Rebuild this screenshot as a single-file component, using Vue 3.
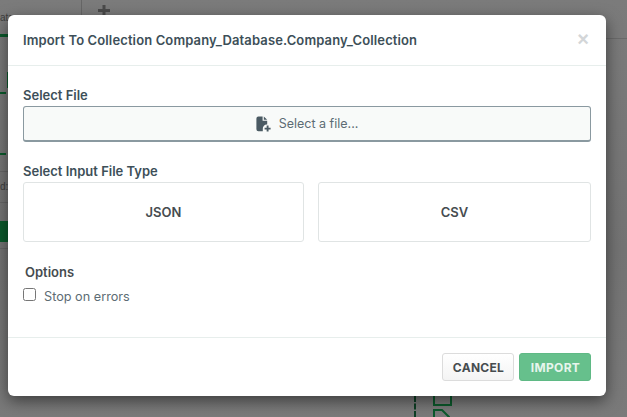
<script setup>
const fileTypes = ['JSON', 'CSV']
</script>

<template>
  <div class="page">
    <div class="backdrop" aria-hidden="true">
      <span class="bg-vline"></span>
      <span class="bg-hline"></span>
      <svg class="bg-plus" width="12" height="11" viewBox="0 0 12 11"><path d="M6 0V11M0 5.5H12" stroke="#4a4a4a" stroke-width="3"/></svg>
      <span class="bg-text t1">ata</span>
      <span class="bg-text t2">d:</span>
      <span class="bg-green g1"></span>
      <span class="bg-green g2"></span>
      <span class="bg-green g3"></span>
      <span class="bg-green g4"></span>
      <span class="bg-green g5"></span>
      <span class="bg-rule r1"></span>
      <span class="bg-rule r2"></span>
      <span class="bg-rule r3"></span>
      <span class="bg-dash"></span>
      <span class="bg-box"></span>
      <svg class="bg-doc" width="20" height="12" viewBox="0 0 20 12"><path d="M1 12V1h8l7 7v4" fill="none" stroke="#0b5a2c" stroke-width="2"/></svg>
    </div>
    <div class="overlay">
      <section class="modal">
        <header class="modal-head">
          <h1>Import To Collection Company_Database.Company_Collection</h1>
          <span class="close">×</span>
        </header>
        <div class="modal-body">
          <label class="label">Select File</label>
          <button class="file-btn">
            <svg width="16" height="16" viewBox="0 0 16 16">
              <path d="M2.4 0.6H6.6V4.8H11.2V8.6A4 4 0 0 0 6.8 13V15.2H2.4A2 2 0 0 1 0.4 13.2V2.6A2 2 0 0 1 2.4 .6Z" fill="#4a5a63"/>
              <path d="M7.8 0.6L11.2 3.8H7.8Z" fill="#4a5a63"/>
              <path d="M11.6 9.6V15.6M8.6 12.6H14.6" stroke="#4a5a63" stroke-width="1.9"/>
            </svg>
            <span>Select a file...</span>
          </button>
          <label class="label second">Select Input File Type</label>
          <div class="tiles">
            <button v-for="t in fileTypes" :key="t" class="tile">{{ t }}</button>
          </div>
          <div class="options-title">Options</div>
          <label class="check"><input type="checkbox" /><span>Stop on errors</span></label>
        </div>
        <footer class="modal-foot">
          <button class="btn cancel">CANCEL</button>
          <button class="btn import">IMPORT</button>
        </footer>
      </section>
    </div>
  </div>
</template>

<style>
html, body { margin: 0; background: #777; }
</style>

<style scoped>
.page { position: relative; width: 627px; height: 417px; overflow: hidden; background: #7a7a7a; font-family: Inter, "Liberation Sans", sans-serif; }
.backdrop { position: absolute; inset: 0; background: linear-gradient(#7b7b7b, #737373 60%, #7a7a7a); }
.backdrop span, .backdrop svg { position: absolute; }
.bg-vline { left: 81px; top: 0; width: 1px; height: 15px; background: #666; }
.bg-hline { left: 606px; top: 38px; width: 21px; height: 1px; background: #6a6a6a; }
.bg-plus { left: 98px; top: 5px; }
.bg-text { left: 0; font: 10px/12px "Liberation Sans", sans-serif; color: #3f3f3f; }
.t1 { top: 12px; } .t2 { top: 181px; }
.bg-green { background: #0b5a2c; left: 0; width: 8px; }
.g1 { top: 34px; height: 3px; }
.g2 { top: 92px; height: 2px; width: 6px; }
.g3 { top: 221px; height: 21px; }
.g4 { top: 153px; height: 2px; width: 6px; }
.g5 { top: 72px; left: 7px; width: 1px; height: 16px; }
.bg-rule { left: 0; width: 8px; height: 1px; background: #666; }
.r1 { top: 171px; } .r2 { top: 202px; } .r3 { top: 248px; }
.bg-dash { left: 414px; top: 396px; height: 21px; border-left: 2px dashed #0d3f24; }
.bg-box { left: 433px; top: 396px; width: 15px; height: 8px; border: 2px solid #0b5a2c; border-top: 0; }
.bg-doc { left: 433px; top: 409px; }

.overlay { position: relative; padding: 15px 21px 21px 8px; box-sizing: border-box; height: 417px; }
.modal { height: 381px; background: #fff; border-radius: 6px; box-shadow: 0 5px 15px rgba(0, 0, 0, .5); display: flex; flex-direction: column; color: #3d4f58; }
.modal-head { height: 51px; box-sizing: border-box; border-bottom: 1px solid #e7eeec; display: flex; align-items: center; justify-content: space-between; padding: 0 15px; flex: none; }
h1 { margin: 0; font-size: 13px; font-weight: 600; letter-spacing: .125px; color: #3d4f58; white-space: nowrap; }
.close { font: bold 20px/20px "Liberation Sans", sans-serif; color: #d3d6d8; margin-top: -3px; margin-right: 2px; }
.modal-body { flex: 1; padding: 21px 15px 0; display: flex; flex-direction: column; }
.label { font-size: 13px; font-weight: 600; line-height: 16px; color: #3d4f58; margin-bottom: 3px; }
.second { margin-top: 21px; margin-bottom: 3px; }
button { font-family: inherit; }
.file-btn { height: 36px; flex: none; background: #f8faf9; border: 1px solid #8a99a0; border-bottom-width: 2px; border-radius: 3px; display: flex; align-items: center; justify-content: center; gap: 7px; font-size: 12.5px; color: #5d6c74; padding: 0; }
.tiles { display: flex; gap: 14px; }
.tile { height: 60px; background: #fff; border: 1px solid #e0e4e4; border-radius: 3px; font-size: 13px; font-weight: 600; color: #464c4f; padding: 0; }
.tile:first-child { width: 281px; }
.tile:last-child { flex: 1; }
.options-title { margin: 22px 0 0 2px; font-size: 13px; font-weight: 600; line-height: 16px; color: #464c4f; }
.check { display: flex; align-items: flex-start; gap: 8px; margin-top: 8px; font-size: 12.7px; line-height: 16px; color: #5d6c74; }
.check input { margin: 0; width: 13px; height: 13px; }
.check span { margin-top: 1px; }
.modal-foot { height: 59px; box-sizing: border-box; flex: none; border-top: 1px solid #e7eeec; display: flex; justify-content: flex-end; align-items: flex-start; gap: 5px; padding: 15px 15px 0; }
.btn { height: 28px; border-radius: 3px; font-size: 12px; font-weight: 700; letter-spacing: .3px; padding: 0; }
.cancel { width: 72px; background: linear-gradient(#fff, #f4f4f4); border: 1px solid #dcdcdc; color: #464c4f; padding-left: 1px; }
.import { width: 72px; background: #66c08c; border: 1px solid #5fb985; color: #e6f5ec; padding-left: 1px; }
</style>
